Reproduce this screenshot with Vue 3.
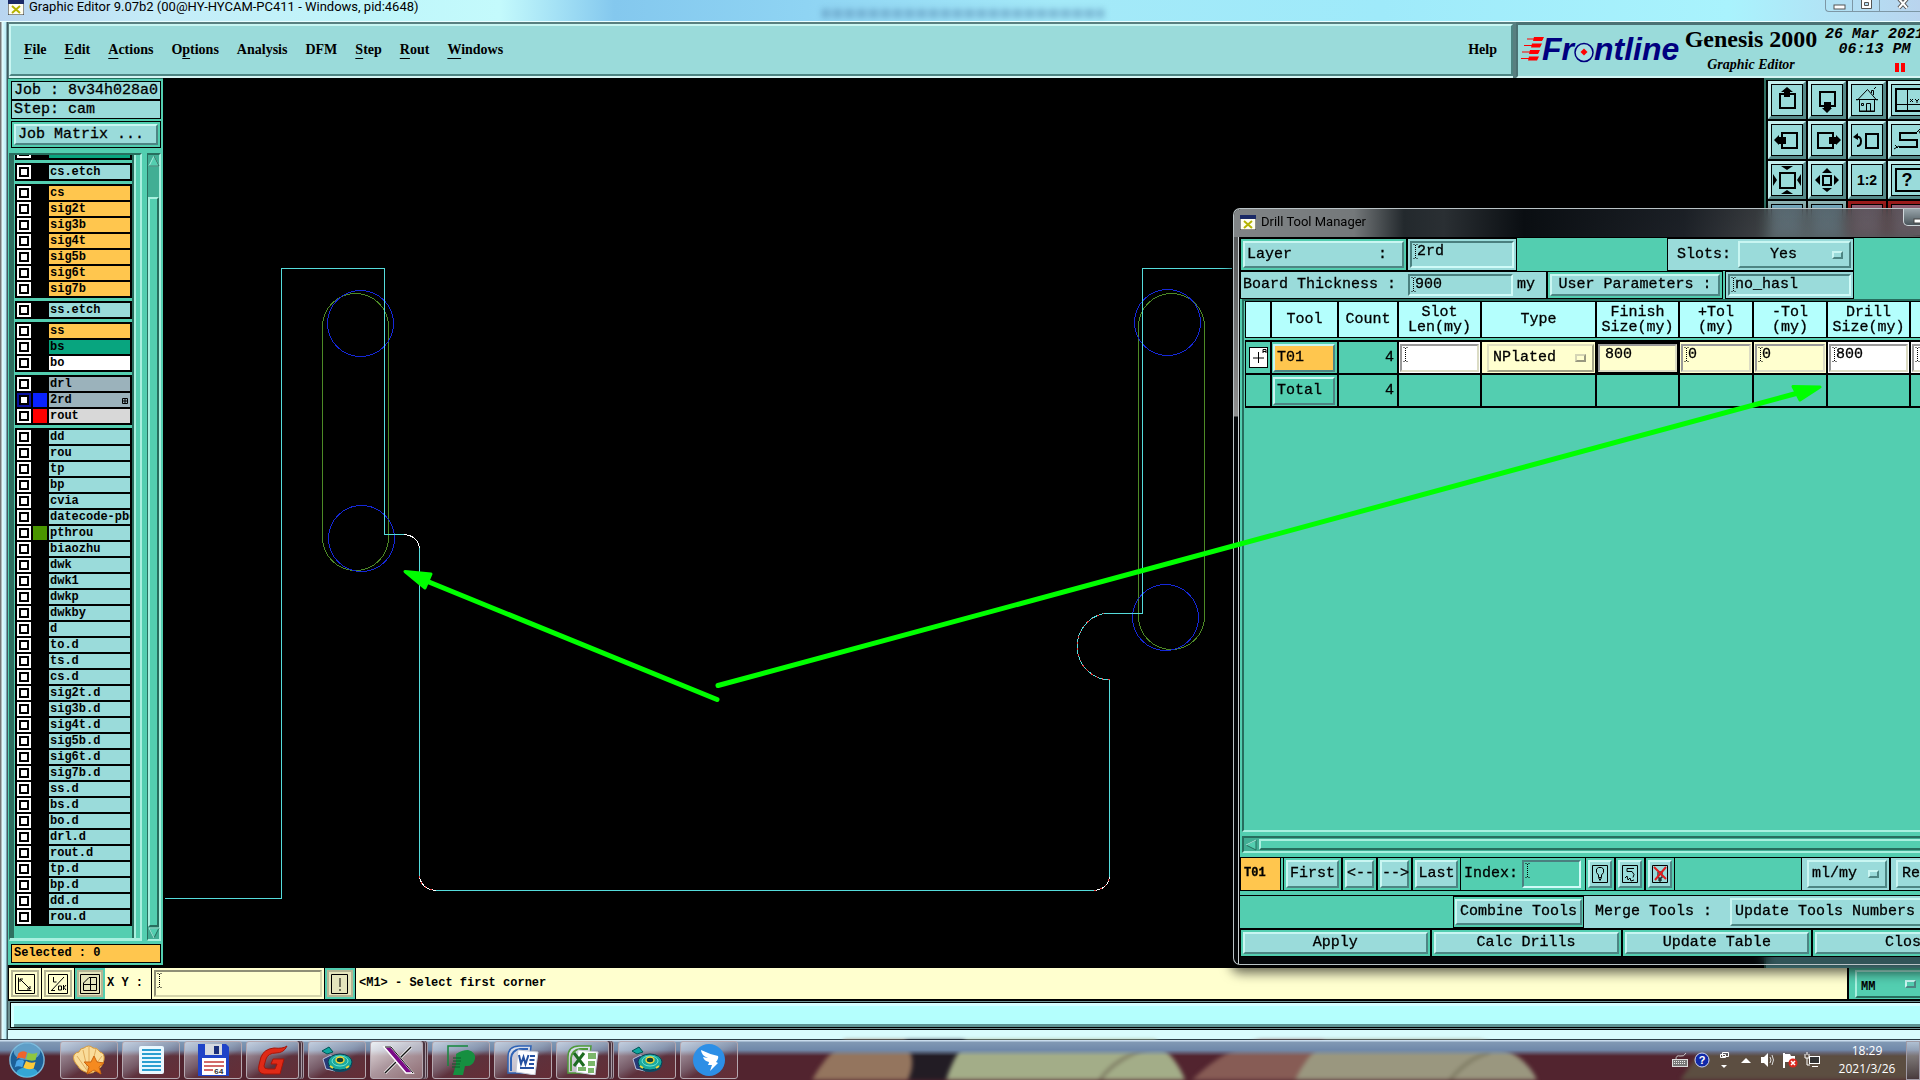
<template>
  <div class="desktop">
    <svg class="defs" aria-hidden="true">
      <symbol id="xwin" viewBox="0 0 16 15">
        <rect x="0" y="0" width="16" height="15" fill="#fffef0" stroke="#222" />
        <rect x="0" y="0" width="16" height="4" fill="#1b2a66" />
        <path d="M4 6 L12 13 M12 6 L4 13" stroke="#b5b300" stroke-width="2" />
      </symbol>
      <symbol id="caret" viewBox="0 0 5 15">
        <path d="M0.5 0.5h1M3.5 0.5h1M0.5 14.5h1M3.5 14.5h1" stroke="#000" />
        <path d="M2.5 1v13" stroke="#000" stroke-dasharray="1 1" />
      </symbol>
      <symbol id="disc" viewBox="0 0 32 28">
        <path d="M1 5 L8 1 L12 6 L6 8Z" fill="#0fa7a0" stroke="#055" />
        <path d="M2 13 L10 9 L14 25 L5 23Z" fill="#283a78" stroke="#b9c4dd" />
        <ellipse cx="19" cy="18" rx="12" ry="8" fill="#0b4e68" />
        <ellipse cx="19" cy="16" rx="12" ry="8" fill="#1aa79c" stroke="#073f55" />
        <ellipse cx="19" cy="15" rx="8" ry="5" fill="none" stroke="#6fe8d7" />
        <ellipse cx="19" cy="14" rx="4" ry="3" fill="#0d3f3c" stroke="#f0d735" stroke-width="1.5" />
        <path d="M9 20l3 2M25 22l3-2" stroke="#f0d735" stroke-width="2" />
      </symbol>
      <symbol id="office" viewBox="0 0 32 30">
        <path d="M1 28 V12 Q1 1 12 1 H24 L21 28Z" fill="#e8eef8" fill-opacity="0.75" stroke="currentColor" stroke-width="1.5" />
        <path d="M4 26 V13 Q5 5 13 4 H21" fill="none" stroke="currentColor" stroke-width="2" />
        <path d="M11 5 L31 7 L28 30 L9 27Z" fill="#fdfdff" stroke="#c5cbd6" />
      </symbol>
    </svg>

    <section class="app-window">
      <header class="titlebar">
        <svg class="xwin"><use href="#xwin" /></svg>
        <span class="window-title">Graphic Editor 9.07b2 (00@HY-HYCAM-PC411 - Windows, pid:4648)</span>
        <span class="ghost-title"></span>
        <div class="caption-buttons">
          <button aria-label="Minimize"><svg viewBox="0 0 14 12"><rect x="1" y="6" width="11" height="4" fill="#fff" stroke="#555" /></svg></button>
          <button aria-label="Maximize"><svg viewBox="0 0 14 12"><path d="M1.500 0.500h10v9h-10zM4.500 3.500h4v3h-4z" fill="#fff" stroke="#555" fill-rule="evenodd" /></svg></button>
          <button class="wide" aria-label="Close"><svg viewBox="0 0 14 12"><path d="M3 0l8 9M11 0l-8 9" stroke="#555" stroke-width="4" /><path d="M3 0l8 9M11 0l-8 9" stroke="#fff" stroke-width="2" /></svg></button>
        </div>
      </header>

      <div class="head-row">
        <nav class="menubar">
          <button v-for="m in menus" :key="m.join('')"><span>{{ m[0] }}</span><u>{{ m[1] }}</u><span>{{ m[2] }}</span></button>
          <button class="help">Help</button>
        </nav>
        <div class="brand">
          <svg class="logo" viewBox="0 0 162 52" role="img" aria-label="Frontline">
            <g fill="#f00" stroke="#f00">
              <path d="M6 14h16M3 20.500h17M1 27h17M0 33.500h16" />
              <path d="M13 12h10l-2 4h-9zM11 18.500h10l-2 4h-9zM9 25h10l-2 4h-9zM8 31.500h10l-2 4h-9z" stroke="none" />
            </g>
            <text x="21" y="35">Fr</text>
            <circle cx="63" cy="27.500" r="9" fill="#a9e0e2" stroke="#00007f" stroke-width="1.500" />
            <path d="M63 23.500l3.500 3.500-3.500 3.500-3.500-3.500z" fill="#f00" />
            <text x="73" y="35">ntline</text>
          </svg>
          <div class="product">
            <strong>Genesis 2000</strong>
            <em>Graphic Editor</em>
          </div>
          <div class="clock">
            <span>26 Mar 2021</span>
            <span>06:13 PM</span>
            <i class="pause"></i>
          </div>
        </div>
      </div>

      <div class="workspace">
        <aside class="sidebar">
          <div class="info">Job : 8v34h028a0</div>
          <div class="info">Step: cam</div>
          <div class="matrix"><button>Job Matrix ...</button></div>
          <div class="layer-area">
            <div class="layer-view">
              <div class="layer-list">
                <div v-for="(group, g) in layerGroups" :key="g" class="layer-group">
                  <label v-for="l in group" :key="l.name" class="layer" :class="[l.tone, { active: l.active }]">
                    <input type="checkbox">
                    <i class="swatch" :class="l.swatch"></i>
                    <span class="layer-name">{{ l.name }}</span>
                    <svg v-if="l.active" class="grid-mark" viewBox="0 0 6 6"><path d="M0.5 0.5h5v5h-5zM3 0v6M0 3h6" fill="none" stroke="#000" /></svg>
                  </label>
                </div>
              </div>
            </div>
            <div class="vscroll">
              <svg viewBox="0 0 12 12"><path d="M6 1 L11 11 H1Z" fill="#53ceb0" stroke="#a8f0df" /><path d="M6 1L11 11H1" fill="none" stroke="#276e5e" /></svg>
              <i class="thumb"></i>
              <svg viewBox="0 0 12 12"><path d="M6 11 L1 1 H11Z" fill="#53ceb0" stroke="#276e5e" /><path d="M11 1H1L6 11" fill="none" stroke="#a8f0df" /></svg>
            </div>
          </div>
          <div class="selected">Selected : 0</div>
        </aside>

        <main class="canvas">
          <!-- board drawing, in screen units of the editor -->
          <svg class="board" shape-rendering="crispEdges">
            <g transform="translate(-163 -78)" fill="none">
              <g stroke="#4d8a26">
                <rect x="322.500" y="293.500" width="66" height="277" rx="33" />
                <rect x="1138.500" y="293.500" width="66" height="356" rx="33" />
              </g>
              <g stroke="#1528d8">
                <circle v-for="h in holes" :key="h.x" :cx="h.x" :cy="h.y" r="33" />
              </g>
              <g stroke="#55dcdc">
                <path d="M165 898.500H281.500V268.500H384.500V534.500H404" />
                <path d="M419.500 548V876M436 890.500H1094M1109.500 877V680M1104 613.500H1142.500V268.500H1232" />
                <path d="M1109.500 680A33.600 33.600 0 0 1 1104 613.500" />
              </g>
              <g stroke="#fff">
                <path d="M404 534.500Q418 536 419.500 548M419.500 876Q421 889 436 890.500M1094 890.500Q1108 889 1109.500 877" />
              </g>
              <g stroke="#e44" stroke-dasharray="2 4">
                <path d="M419.500 876Q421 889 436 890.500M1094 890.500Q1108 889 1109.500 877M1109.500 680A33.600 33.600 0 0 1 1104 613.500" />
              </g>
            </g>
          </svg>
        </main>

        <aside class="toolbox">
          <div class="tool-grid">
            <button v-for="(t, i) in tools" :key="i" :class="t.tone" :aria-label="t.label">
              <svg viewBox="0 0 30 30">
                <path v-for="(d, k) in t.lines" :key="'l' + k" :d="d" fill="none" stroke="#000" :stroke-width="t.thin ? 1 : 2" />
                <path v-if="t.solid" :d="t.solid" fill="#000" />
                <path v-if="t.fine" :d="t.fine" fill="none" stroke="#000" />
                <text v-if="t.text" x="15" :y="t.y" :font-size="t.size" text-anchor="middle">{{ t.text }}</text>
              </svg>
            </button>
          </div>
        </aside>
      </div>

      <div class="status-row">
        <button class="mode" aria-label="Diagonal"><svg viewBox="0 0 20 20"><path d="M0.500 0.500h19v19h-19zM3.500 3.500v13h13M5 5L15 15M5 8V5H8M15 12V15H12" /></svg></button>
        <button class="mode" aria-label="Line ok"><svg viewBox="0 0 20 20"><path d="M0.500 0.500h19v19h-19zM3 17L16 3M3 16.500h4M5.500 3v5h3M10.500 12h3v4h-3zM15.500 11v5M18 11l-2 2.500 2 2.500" /></svg></button>
        <button class="mode on" aria-label="Grid"><svg viewBox="0 0 20 20"><path d="M0.500 0.500h19v19h-19zM3.500 16.500V9L9 3.500H16.500V16.500ZM10.500 3v14M3 10.500h14" /></svg></button>
        <label class="xy-label" for="xy">X Y :</label>
        <div class="xy-box"><div class="field"><input id="xy" type="text"><svg class="caret"><use href="#caret" /></svg></div></div>
        <button class="mode on" aria-label="Message"><svg viewBox="0 0 20 20"><path d="M1.500 0.500h16v19h-16z" /><path d="M10 4v9M10 15v2" stroke-width="2" /></svg></button>
        <div class="message">&lt;M1&gt; - Select first corner</div>
        <label class="unit-box"><select aria-label="Units"><option>MM</option></select><i class="knob"></i></label>
      </div>
      <div class="prompt"><div></div></div>
    </section>

    <section class="dialog">
      <header class="dialog-title">
        <svg class="xwin"><use href="#xwin" /></svg>
        <span>Drill Tool Manager</span>
        <button aria-label="Minimize"><svg viewBox="0 0 14 6"><rect x="1" y="1" width="11" height="4" fill="#fff" stroke="#444" /></svg></button>
      </header>
      <div class="dialog-body">
        <div class="form-row">
          <div class="frame layer-frame"><button class="btn spread"><span>Layer</span><span>:</span></button></div>
          <div class="frame pale layer-field"><div class="field"><input type="text" value="2rd" aria-label="Layer"><svg class="caret"><use href="#caret" /></svg></div></div>
          <div class="slots">
            <label for="slots">Slots:</label>
            <div class="option"><select id="slots"><option>Yes</option></select><i class="knob"></i></div>
          </div>
        </div>
        <div class="form-row second">
          <div class="frame pale thickness">
            <label for="thick">Board Thickness :</label>
            <div class="field"><input id="thick" type="text" value="900"><svg class="caret"><use href="#caret" /></svg></div>
            <span>my</span>
          </div>
          <div class="frame params"><button class="btn">User Parameters :</button></div>
          <div class="frame pale param-field"><div class="field"><input type="text" value="no_hasl" aria-label="User parameters"><svg class="caret"><use href="#caret" /></svg></div></div>
        </div>

        <div class="table-view">
          <table>
            <colgroup><col v-for="(w, i) in columns" :key="i" :class="w"></colgroup>
            <thead>
              <tr>
                <th></th><th>Tool</th><th>Count</th><th>Slot<br>Len(my)</th><th>Type</th><th>Finish<br>Size(my)</th>
                <th>+Tol<br>(my)</th><th>-Tol<br>(my)</th><th>Drill<br>Size(my)</th><th></th>
              </tr>
            </thead>
            <tbody>
              <tr>
                <td><svg class="expand" viewBox="0 0 19 21"><rect x="0.500" y="0.500" width="18" height="20" fill="#fff" stroke="#000" /><path d="M4 11h11M9.500 5v11M14 6V2.500h3V6M14 4.500h3" fill="none" stroke="#000" /></svg></td>
                <td><button class="btn orange">T01</button></td>
                <td class="num">4</td>
                <td class="white"><div class="field"><input type="text" aria-label="Slot length"><svg class="caret"><use href="#caret" /></svg></div></td>
                <td class="cream"><div class="option"><select aria-label="Type"><option>NPlated</option></select><i class="knob"></i></div></td>
                <td class="cream focus"><div class="field"><input type="text" value="800" aria-label="Finish size"></div></td>
                <td class="cream"><div class="field"><input type="text" value="0" aria-label="Plus tolerance"><svg class="caret"><use href="#caret" /></svg></div></td>
                <td class="cream"><div class="field"><input type="text" value="0" aria-label="Minus tolerance"><svg class="caret"><use href="#caret" /></svg></div></td>
                <td class="white"><div class="field"><input type="text" value="800" aria-label="Drill size"><svg class="caret"><use href="#caret" /></svg></div></td>
                <td class="white"><div class="field"><input type="text" aria-label="Drill"><svg class="caret"><use href="#caret" /></svg></div></td>
              </tr>
              <tr>
                <td></td><td><button class="btn green">Total</button></td><td class="num">4</td>
                <td v-for="n in 7" :key="n"></td>
              </tr>
            </tbody>
          </table>
        </div>
        <div class="hscroll">
          <svg viewBox="0 0 12 12"><path d="M1 6L11 1V11Z" fill="#53ceb0" stroke="#276e5e" /><path d="M11 1L1 6" stroke="#a8f0df" /></svg>
          <i></i>
        </div>

        <div class="nav-row">
          <div class="current">T01</div>
          <div class="frame w-first"><button class="btn">First</button></div>
          <div class="frame w-arrow"><button class="btn">&lt;--</button></div>
          <div class="frame w-arrow"><button class="btn">--&gt;</button></div>
          <div class="frame w-last"><button class="btn">Last</button></div>
          <label class="index-label" for="index">Index:</label>
          <div class="field index"><input id="index" type="text"><svg class="caret"><use href="#caret" /></svg></div>
          <div class="frame w-icon"><button class="btn" aria-label="Light"><svg viewBox="0 0 16 18"><path d="M0.500 0.500h15v17h-15zM6.500 12V10L4.500 7.500V4L6.500 2.500h3L11.500 4v3.500L9.500 10v2M6.500 12.500h3l-1.500 3z" /></svg></button></div>
          <div class="frame w-icon"><button class="btn" aria-label="Snap"><svg viewBox="0 0 16 18"><path d="M0.500 0.500h15v17h-15zM12 3.500H5v3h5l2 3-1 3M3 13l2-2 1 4 2-2 1 3 3-1" /></svg></button></div>
          <div class="frame w-icon"><button class="btn" aria-label="Light off"><svg viewBox="0 0 16 18"><path d="M0.500 0.500h15v17h-15zM6 13V7h4v6zM7 14h2v2h-2z" /><path class="cross" d="M2 2L14 14M14 2L3 15" /></svg></button></div>
          <div class="units"><div class="option"><select aria-label="Size units"><option>ml/my</option></select><i class="knob"></i></div></div>
          <div class="units rest"><button class="btn">Reset</button></div>
        </div>
        <div class="tools-row">
          <div class="frame combine"><button class="btn">Combine Tools</button></div>
          <div class="merge">
            <label for="merge">Merge Tools :</label>
            <div class="option"><select id="merge"><option>Update Tools Numbers</option></select></div>
          </div>
        </div>
        <div class="action-row">
          <div v-for="a in ['Apply', 'Calc Drills', 'Update Table', 'Close']" :key="a" class="frame"><button class="btn">{{ a }}</button></div>
        </div>
      </div>
    </section>

    <svg class="notes" aria-hidden="true">
      <g fill="#00ff00" stroke="#00ff00" stroke-linecap="round" stroke-linejoin="round">
        <path d="M717 699.500L424 580" stroke-width="5" fill="none" />
        <path d="M405 571.500L431 574L425 588Z" stroke-width="3" />
        <path d="M718 685.500L1798 393" stroke-width="5" fill="none" />
        <path d="M1820 387L1793 386.500L1800 400Z" stroke-width="3" />
      </g>
    </svg>

    <footer class="taskbar">
      <svg class="wallpaper" viewBox="0 0 1920 40" preserveAspectRatio="none">
        <path d="M812 40Q825 16 845 0H905Q918 20 908 40Z" fill="#94755e" />
        <path d="M905 0H965L948 40H908Q918 20 905 0Z" fill="#221c24" />
        <path d="M946 40Q952 20 966 0H1155Q1178 20 1185 40Z" fill="#a3ad88" />
        <path d="M1192 40Q1225 8 1260 0H1325L1295 40Z" fill="#875c55" />
        <path d="M1295 40Q1305 18 1325 0H1480Q1525 12 1537 40Z" fill="#9a977f" />
        <path d="M1100 40Q1115 18 1152 6M1450 40Q1468 18 1490 12" stroke="#7b7860" stroke-width="3" fill="none" />
        <path d="M1680 40L1700 12H1920V40Z" fill="#5c4e41" />
      </svg>
      <button class="start" aria-label="Start">
        <svg viewBox="0 0 40 40">
          <circle cx="20" cy="20" r="18" fill="#1c5f97" stroke="#78b7d9" stroke-width="1.500" />
          <ellipse cx="20" cy="11" rx="14" ry="9" fill="#8cc8e8" fill-opacity="0.6" />
          <ellipse cx="20" cy="33" rx="11" ry="5" fill="#3fc3f0" fill-opacity="0.7" />
          <path d="M11 13Q15 9 20 12L18 19Q13 16 9 19Z" fill="#f0642c" />
          <path d="M21 12Q26 15 31 12L29 20Q24 22 19 19Z" fill="#8fc641" />
          <path d="M9 21Q13 18 17 21L15 28Q11 25 7 28Z" fill="#4aa6e8" />
          <path d="M19 21Q24 24 29 22L27 29Q21 31 16 28Z" fill="#fcc93a" />
        </svg>
      </button>
      <button v-for="(t, i) in tasks" :key="i" class="task" :class="{ stacked: t.stack, current: t.current }" :aria-label="t.label">
        <svg v-if="t.icon === 'shell'" viewBox="0 0 34 32">
          <path d="M17 29Q8 27 6 22Q0 16 2 11Q4 8 7 8Q8 4 12 4Q17 0 21 4Q25 3 28 8Q33 9 32 16Q30 24 25 26Q20 30 17 29Z" fill="#f9dc9a" stroke="#d79a3b" />
          <path d="M16 28L5 12M16 28L11 6M17 28L17 3M18 28L24 5M18 28L30 12" stroke="#e0ac5c" fill="none" />
          <path d="M22 12L25 18L32 19L27 23L29 30L22 26L15 30L17 23L12 18L19 18Z" fill="#f58a1f" stroke="#c96510" />
        </svg>
        <svg v-else-if="t.icon === 'note'" viewBox="0 0 34 32">
          <rect x="5" y="2" width="25" height="28" rx="2" fill="#e9f8ff" />
          <path d="M8 6h19M8 10h19M8 14h19M8 18h19M8 22h19M8 26h19" stroke="#2b9fd0" stroke-width="2" />
        </svg>
        <svg v-else-if="t.icon === 'disk'" viewBox="0 0 34 32">
          <path d="M2 0H30L33 3V32H2Z" fill="#1f43c8" />
          <rect x="9" y="0" width="17" height="11" fill="#d5d9e0" /><rect x="18" y="2" width="5" height="8" fill="#1b2f7c" />
          <rect x="6" y="14" width="24" height="17" fill="#fff" />
          <path d="M8 18h20M8 22h20M8 26h9" stroke="#c33a3a" stroke-width="1.500" />
          <text x="18" y="30" font-size="8" font-weight="bold" fill="#333">64</text>
        </svg>
        <svg v-else-if="t.icon === 'g'" viewBox="0 0 34 32">
          <path d="M31 2Q28 9 20 9Q12 9 10 15L8 22Q8 25 12 25H19L21 20H15L17 15H28L24 30H8Q1 29 3 21L5 13Q8 5 18 4Q27 5 31 2Z" fill="#e02a17" stroke="#a81408" />
        </svg>
        <svg v-else-if="t.icon === 'disc'" viewBox="0 0 34 32"><use href="#disc" x="1" y="2" width="32" height="28" /></svg>
        <svg v-else-if="t.icon === 'x'" viewBox="0 0 34 32">
          <path d="M30 3L4 29" stroke="#fff" stroke-width="3" /><path d="M30 3L4 29" stroke="#111" stroke-width="1.500" />
          <path d="M3 3H10L32 29H25Z" fill="#7a0a86" stroke="#fff" stroke-width="1.500" /><path d="M4 3H10L32 29" stroke="#111" fill="none" />
        </svg>
        <svg v-else-if="t.icon === 'p'" viewBox="0 0 34 32">
          <path d="M4 22V2H24" fill="none" stroke="#15883c" stroke-width="1.500" />
          <path d="M12 10Q18 6 24 6Q32 8 31 15Q29 23 21 22L19 31H9L12 20Z" fill="#168f40" />
          <path d="M9 14h8M9 17h8M8 20h8M8 23h8" stroke="#0b5d28" />
        </svg>
        <svg v-else-if="t.icon === 'word'" viewBox="0 0 34 32" color="#2f63b5">
          <use href="#office" x="1" y="1" width="32" height="30" />
          <path d="M13 11l2 9 2.500-7 2 7 3-9M24 12h5M23.500 16h5M23 20h5M14 24h14" fill="none" stroke="#2450a0" stroke-width="2" />
        </svg>
        <svg v-else-if="t.icon === 'excel'" viewBox="0 0 34 32" color="#4f9a3a">
          <use href="#office" x="1" y="1" width="32" height="30" />
          <path d="M22 9h8v6h-8zM22 17h7v5h-7zM22 24h6v5h-6zM12 23h8v4h-8z" fill="#7bb66a" />
          <path d="M8 9L18 22M18 9L8 22" stroke="#1d6b22" stroke-width="3" />
        </svg>
        <svg v-else viewBox="0 0 34 32">
          <circle cx="17" cy="16" r="16" fill="#2d8fe6" />
          <path d="M9 6Q17 10 26 12Q27 14 24 18L26 19L18 27L20 21H16Q17 19 17 18Q12 17 11 13Q15 14 16 14Q9 11 9 6Z" fill="#fff" />
        </svg>
      </button>
      <div class="tray">
        <svg viewBox="0 0 16 16"><rect x="0.500" y="7.500" width="15" height="7" fill="#777" stroke="#ddd" /><path d="M2 9.500h12M2 11.500h12" stroke="#eee" stroke-dasharray="1 1" /><path d="M4 7Q4 3 8 4T14 1" fill="none" stroke="#ccc" /></svg>
        <svg viewBox="0 0 16 16"><circle cx="8" cy="8" r="7" fill="#1029a8" stroke="#cfd6f2" /><text x="8" y="12" font-size="11" font-weight="bold" fill="#fff" text-anchor="middle">?</text></svg>
        <svg viewBox="0 0 16 16"><path d="M6.500 0.500h6v4h-6zM4.500 2.500h5v3h-5z" fill="none" stroke="#fff" /><path d="M5 13h6l-3 3z" fill="#fff" /></svg>
        <svg viewBox="0 0 16 16"><path d="M3 11h10L8 6z" fill="#fff" /></svg>
        <svg viewBox="0 0 16 16"><path d="M1 5h3l4-4v14l-4-4H1z" fill="#fff" /><path d="M10 5q2 3 0 6M12 3q3 5 0 10" fill="none" stroke="#ddd" /></svg>
        <svg viewBox="0 0 16 16"><path d="M2 1v15" stroke="#fff" stroke-width="2" /><path d="M3 2h5l1 2h4v6H3z" fill="#fff" /><circle cx="11" cy="11" r="4.500" fill="#d9271e" /><path d="M9 9l4 4M13 9l-4 4" stroke="#fff" stroke-width="1.500" /></svg>
        <svg viewBox="0 0 16 16"><rect x="5.500" y="4.500" width="10" height="7" fill="#333" stroke="#fff" /><path d="M8 14.500h6M1 2v4h4V2M3 0v3M3 6v7h3" fill="none" stroke="#fff" /></svg>
      </div>
      <div class="time"><span>18:29</span><span>2021/3/26</span></div>
      <button class="show-desktop" aria-label="Show desktop"></button>
    </footer>
  </div>
</template>

<script setup>
// [before, underlined, after]
const menus = [
  ['', 'F', 'ile'],
  ['', 'E', 'dit'],
  ['', 'A', 'ctions'],
  ['O', 'p', 'tions'],
  ['Analysis', '', ''],
  ['DFM', '', ''],
  ['', 'S', 'tep'],
  ['', 'R', 'out'],
  ['', 'W', 'indows'],
]

const rows = (names, tone = '') => names.split(' ').map((name) => ({ name, tone }))

const layerGroups = [
  rows('bs', 'sea'),
  rows('cs.etch'),
  rows('cs sig2t sig3b sig4t sig5b sig6t sig7b', 'orange'),
  rows('ss.etch'),
  [...rows('ss', 'orange'), ...rows('bs', 'sea'), ...rows('bo', 'white')],
  [
    { name: 'drl', tone: 'slate' },
    { name: '2rd', tone: 'slate', swatch: 'blue', active: true },
    { name: 'rout', tone: 'grey', swatch: 'red' },
  ],
  [
    ...rows('dd rou tp bp cvia datecode-pbd'),
    { name: 'pthrou', tone: '', swatch: 'olive' },
    ...rows('biaozhu dwk dwk1 dwkp dwkby d to.d ts.d cs.d sig2t.d sig3b.d sig4t.d sig5b.d sig6t.d sig7b.d'),
    ...rows('ss.d bs.d bo.d drl.d rout.d tp.d bp.d dd.d rou.d'),
  ],
]

const columns = ['c-ico', 'c-tool', 'c-cnt', 'c-mid', 'c-type', 'c-mid', 'c-tol', 'c-tol', 'c-mid', 'c-rest']

const holes = [
  { x: 360.5, y: 323.5 },
  { x: 361.5, y: 538.5 },
  { x: 1167.5, y: 322.5 },
  { x: 1165.5, y: 617.5 },
]

const tools = [
  { label: 'Pan up', lines: ['M8 9h15v14h-15z'], solid: 'M15 2L21 7H18V12H12V7H9Z' },
  { label: 'Pan down', lines: ['M8 7h15v14h-15z'], solid: 'M15 28L20 23H19V17H12V23H10Z' },
  { label: 'Home', thin: true, lines: ['M5 15.5L15.500 4.500L25 15.500M4 14.500h22M7.500 15v11.500h15V15M14.500 26V18.500h4V26M9.500 18.500h2v2h-2zM19.500 8V5.500h2V10M22 4l2-2'], fine: 'M7 26h16' },
  { label: 'Position', lines: ['M4 4h25v22h-25z'], fine: 'M15.500 4v22M4 19.500h25M18 14l3 3M21 14l-3 3M23 14l2 2 2-2M25 16v2' },
  { label: 'Pan left', lines: ['M10 8h15v15h-15z'], solid: 'M2 15L7 10V12H14V19H7V20Z' },
  { label: 'Pan right', lines: ['M6 8h15v15h-15z'], solid: 'M29 15L24 20V19H17V12H24V10Z' },
  { label: 'Previous view', lines: ['M14 9h12v14h-12z', 'M4 12q5-1 5 4t-4 5'], solid: 'M1 12L6 8V15Z' },
  { label: 'Snake', lines: ['M25 8H8V15H25V22H7'], fine: 'M24 8l4-4M27 6l2 4M2 24l5-3M3 20l3 3' },
  { label: 'Zoom out', lines: ['M8 8h15v15h-15z'], solid: 'M9 1H21L15 5ZM9 29H21L15 25ZM1 9V21L5 15ZM29 9V21L25 15Z' },
  { label: 'Zoom in', lines: ['M11 11h8v9h-8z'], solid: 'M15 3L20 8H10ZM15 27L20 23H10ZM3 15L8 10V20ZM27 15L22 10V20Z' },
  { label: 'Scale', lines: [], text: '1:2', size: 14, y: 20 },
  { label: 'Query', lines: ['M4 4h25v22h-25z'], text: '?', size: 18, y: 21 },
  { label: 'Tool', lines: [], tone: 'dim' },
  { label: 'Tool', lines: [], tone: 'dim' },
  { label: 'Tool', lines: [], tone: 'red' },
  { label: 'Tool', lines: [], tone: 'red' },
]

const tasks = [
  { icon: 'shell', label: 'Shell' },
  { icon: 'note', label: 'Notes' },
  { icon: 'disk', label: 'Total Commander' },
  { icon: 'g', label: 'Genesis', stack: true },
  { icon: 'disc', label: 'Toolkit' },
  { icon: 'x', label: 'X server', stack: true, current: true },
  { icon: 'p', label: 'Print' },
  { icon: 'word', label: 'Word' },
  { icon: 'excel', label: 'Excel', stack: true },
  { icon: 'disc', label: 'Toolkit' },
  { icon: 'ding', label: 'DingTalk' },
]
</script>

<style>
body {
  margin: 0;
  overflow: hidden;
}
</style>

<style scoped>
.desktop {
  --teal: #9adbda;
  --green: #53ceb0;
  --light: #c9f6f2;
  --shade: #4d8583;
  position: relative;
  display: flex;
  flex-direction: column;
  height: 100vh;
  overflow: hidden;
  background: #d9fcfd;
  color: #000;
  font-family: "Liberation Mono", monospace;
}
.desktop *,
.desktop *::before {
  box-sizing: border-box;
}
.defs {
  position: absolute;
  width: 0;
  height: 0;
}
button,
input,
select {
  margin: 0;
  padding: 0;
  border: 0;
  border-radius: 0;
  background: none;
  color: inherit;
  font: inherit;
  appearance: none;
}
svg {
  display: block;
  flex: none;
}

/* main window */
.app-window {
  flex: 1;
  min-height: 0;
  display: flex;
  flex-direction: column;
  padding: 0 0 9px 8px;
  background: linear-gradient(90deg, #777 1px, #e5fdff 2px, #b8ecf6 6px, #3f5a60 7px, #3f5a60 8px, transparent 8px), linear-gradient(#d9fcfd, #d9fcfd);
}
.titlebar {
  position: relative;
  flex: none;
  display: flex;
  height: 22px;
  margin-left: -8px;
  padding-left: 8px;
  overflow: hidden;
  background: linear-gradient(90deg, #b9d5f0, #c5ecf8 8%, #bff6fa 20%, #c4fafc 26%, #84c8ee 32%, #8fd4f3 42%, #a4e9f8 55%, #9feafa 72%, #a9f3fd 90%, #b9d4ee);
  border-bottom: 1px solid #eaffff;
}
.xwin {
  width: 16px;
  height: 15px;
}
.window-title {
  margin-left: 5px;
  font: 13px/14px Roboto, "Open Sans", sans-serif;
}
.ghost-title {
  position: absolute;
  left: 822px;
  top: 9px;
  width: 282px;
  height: 9px;
  background: repeating-linear-gradient(90deg, #4b7fa8 0 7px, #7fb8da 7px 12px);
  opacity: 0.5;
  filter: blur(3px);
}
.caption-buttons {
  display: flex;
  margin-left: auto;
  height: 12px;
  border: 1px solid #7d97a5;
  border-top: 0;
  border-right: 0;
  border-radius: 0 0 0 4px;
}
.caption-buttons button {
  width: 27px;
  padding: 0 7px;
  border-right: 1px solid #7d97a5;
}
.caption-buttons .wide {
  width: 40px;
  padding: 0 13px 0 16px;
  border-right: 0;
}
.caption-buttons svg {
  width: 14px;
  height: 12px;
  margin-top: -2px;
}
.head-row {
  flex: none;
  display: flex;
  height: 56px;
  background: #587f80;
}
.menubar {
  flex: 1;
  display: flex;
  align-items: center;
  gap: 18px;
  margin: 2px 3px 2px 1px;
  padding: 0 14px 0 13px;
  background: var(--teal);
  border: 2px solid;
  border-color: var(--light) var(--shade) var(--shade) var(--light);
  box-shadow: 0 2px #d5f6f4;
  font: bold 14px/18px "Liberation Serif", serif;
}
.menubar u {
  text-underline-offset: 4px;
}
.menubar .help {
  margin-left: auto;
}
.brand {
  flex: 0 0 404px;
  display: flex;
  overflow: hidden;
  background: var(--teal);
  border: 2px solid;
  border-color: #4b7274 #4b7274 #d5f6f4;
  border-right: 0;
  border-top-width: 3px;
}
.logo {
  width: 162px;
  height: 52px;
  margin-left: 3px;
}
.logo text {
  font: italic bold 32px "Liberation Sans", sans-serif;
  fill: #00007f;
}
.product {
  width: 136px;
  flex: none;
  text-align: center;
  white-space: nowrap;
  font-family: "Liberation Serif", serif;
}
.product strong {
  display: block;
  font-size: 24px;
  line-height: 28px;
}
.product em {
  display: block;
  margin-top: 2px;
  font-size: 14px;
  font-weight: bold;
  line-height: 20px;
}
.clock {
  flex: none;
  display: flex;
  flex-direction: column;
  align-items: center;
  margin-left: 6px;
  padding-top: 2px;
  font: italic bold 15px/15px "Liberation Mono", monospace;
  white-space: nowrap;
}
.pause {
  width: 10px;
  height: 9px;
  margin: 6px 0 0 50px;
  border: solid #f00;
  border-width: 0 4px;
}

/* workspace */
.workspace {
  flex: 1;
  min-height: 0;
  display: flex;
  background: #000;
}
.sidebar {
  flex: 0 0 155px;
  display: flex;
  flex-direction: column;
  margin-bottom: 3px;
  padding: 2px 2px 2px 3px;
  background: var(--green);
  border-top: 1px solid #276e5e;
}
.info {
  height: 19px;
  padding-left: 2px;
  border: 1px solid #000;
  background: var(--teal);
  font-size: 15px;
  line-height: 18px;
  white-space: nowrap;
}
.info,
.matrix {
  -webkit-text-stroke: 0.3px #000;
}
.matrix {
  height: 27px;
  margin-top: 2px;
  padding: 2px;
  border: 1px solid #000;
}
.matrix button {
  width: 100%;
  height: 21px;
  padding-left: 2px;
  background: var(--teal);
  border: 2px solid;
  border-color: var(--light) var(--shade) var(--shade) var(--light);
  text-align: left;
  font-size: 15px;
  line-height: 16px;
}
.layer-area {
  flex: 1;
  min-height: 0;
  display: flex;
  gap: 5px;
  margin: 5px -1px 3px -2px;
}
.layer-view {
  width: 133px;
  overflow: hidden;
  padding: 0 7px 3px 5px;
  border: solid;
  border-width: 2px 2px 3px 1px;
  border-color: #276e5e #a8f0df #a8f0df #276e5e;
  background: linear-gradient(90deg, #2f6f60 4px, var(--green) 4px 122px, #276e5e 122px 124px, #a8f0df 124px 126px, var(--green) 126px);
}
.layer-list {
  margin-top: -13px;
}
.layer-group {
  width: 117px;
  margin-bottom: 3px;
  padding: 2px 2px 0;
  background: #000;
}
.layer {
  display: flex;
  height: 16px;
  gap: 2px;
}
.layer input {
  width: 14px;
  height: 14px;
  border: 2px solid #fff;
  background: #fff;
  box-shadow: inset 0 0 0 2px #000;
}
.layer.active input {
  border-color: #0a12a0;
}
.swatch {
  width: 14px;
  height: 14px;
}
.swatch.blue {
  background: #0a22ff;
}
.swatch.red {
  background: #f00;
}
.swatch.olive {
  background: #4a9600;
}
.layer-name {
  flex: 1;
  height: 14px;
  padding-left: 1px;
  overflow: hidden;
  background: var(--teal);
  font-size: 12px;
  font-weight: bold;
  line-height: 14px;
  white-space: nowrap;
}
.orange .layer-name {
  background: #ffc64e;
}
.sea .layer-name {
  background: #08a57f;
}
.white .layer-name {
  background: #fff;
}
.slate .layer-name {
  background: #9bb2bb;
}
.grey .layer-name {
  background: #d8d8d8;
}
.grid-mark {
  width: 6px;
  height: 6px;
  margin: 5px 2px 0 -10px;
}
.vscroll {
  width: 14px;
  display: flex;
  flex-direction: column;
  border: 1px solid;
  border-width: 2px 2px 2px 1px;
  border-color: #276e5e #a8f0df #a8f0df #276e5e;
  background: #41ae94;
}
.vscroll svg,
.hscroll svg {
  width: 12px;
  height: 12px;
}
.vscroll .thumb {
  flex: 1;
  margin-top: 30px;
  border: 2px solid;
  border-color: #a8f0df #276e5e #276e5e #a8f0df;
  background: var(--green);
}
.selected {
  height: 19px;
  padding-left: 2px;
  border: 1px solid #000;
  background: #ffc64e;
  font-size: 12px;
  font-weight: bold;
  line-height: 17px;
}
.canvas {
  flex: 1;
  overflow: hidden;
}
.board {
  width: 100%;
  height: 100%;
}
.toolbox {
  flex: 0 0 156px;
  overflow: hidden;
  padding: 1px 0 0 2px;
  border-left: 2px solid #2f6f62;
  background: #6fc0c4;
  border-top: 2px solid #2f6f62;
}
.tool-grid {
  display: grid;
  grid-template-columns: repeat(4, 38px);
  gap: 2px;
  width: 160px;
  margin: -1px 0 0 -2px;
  padding: 1px 0 2px 2px;
  background: #000;
}
.tool-grid button {
  width: 38px;
  height: 38px;
  border: 3px solid;
  border-color: #c4efee #558a8a #558a8a #c4efee;
  padding: 1px;
  background: var(--teal);
}
.tool-grid svg {
  width: 30px;
  height: 30px;
  outline: 1px solid #000;
}
.tool-grid text {
  font-family: "Liberation Sans", sans-serif;
  font-weight: bold;
}
.tool-grid .dim {
  background: #7fb6cc;
  border-color: #8fb5b5;
}
.tool-grid .red {
  background: #a06a80;
  border-color: #a01c1c;
}

/* status */
.status-row {
  flex: none;
  display: flex;
  height: 33px;
  padding-left: 1px;
  border-bottom: 2px solid #000;
  background: #000;
  font-size: 12px;
  font-weight: bold;
  line-height: 31px;
}
.mode {
  flex: none;
  width: 32px;
  margin-right: 1px;
  padding: 4px;
  border: 2px solid #ffffcf;
  outline: 2px solid #b5b594;
  outline-offset: -4px;
  background: #ffffcf;
}
.mode svg {
  width: 20px;
  height: 20px;
}
.mode path {
  fill: none;
  stroke: #000;
  stroke-width: 1;
}
.mode.on {
  width: 30px;
  padding: 4px 3px;
  margin: 0;
  border-color: var(--green);
  background: #e6e6bd;
}
.xy-label {
  width: 46px;
  padding-left: 2px;
  background: #ffffcf;
  white-space: nowrap;
}
.xy-box {
  width: 172px;
  margin: 0 1px;
  padding: 2px;
  background: #ffffcf;
}
.xy-box .field {
  height: 27px;
  border-color: #8f8f76 #d5d5ab #d5d5ab #8f8f76;
}
.message {
  flex: 1;
  margin-left: 1px;
  padding-left: 3px;
  background: #ffffcf;
  white-space: pre;
}
.unit-box {
  position: relative;
  flex: 0 0 71px;
  min-width: 0;
  margin-left: 2px;
  padding: 2px 0 1px 6px;
  overflow: hidden;
  background: var(--green);
}
.unit-box select {
  width: 90px;
  height: 28px;
  padding-left: 4px;
  border: 2px solid;
  border-color: #a8f0df #276e5e #276e5e #a8f0df;
}
.unit-box .knob {
  right: 4px;
}
.prompt {
  flex: none;
  height: 29px;
  padding: 1px 0 1px 2px;
  border-bottom: 1px solid #000;
  background: #6c9090;
}
.prompt div {
  height: 100%;
  background: #b4fffd;
  border: 1px solid #000;
  border-right: 0;
  box-shadow: inset 3px 3px #d5ffff, inset 0 -3px #5d9392;
}

/* shared motif parts */
.field {
  position: relative;
  height: 28px;
  border: 2px solid;
  border-color: #4a807f #d0fbf8 #d0fbf8 #4a807f;
}
.field input {
  display: block;
  width: 100%;
  height: 18px;
  padding-left: 5px;
}
.caret {
  position: absolute;
  left: 1px;
  top: 1px;
  width: 5px;
  height: 15px;
}
.option {
  position: relative;
  height: 28px;
  border: 2px solid;
  border-color: var(--light) var(--shade) var(--shade) var(--light);
}
.option select {
  width: 100%;
  height: 100%;
}
.knob {
  position: absolute;
  right: 6px;
  top: 50%;
  width: 11px;
  height: 8px;
  margin-top: -4px;
  border: 2px solid;
  border-color: var(--light) var(--shade) var(--shade) var(--light);
}
.frame {
  flex: none;
  border: 1px solid #000;
  padding: 2px;
  background: var(--green);
}
.frame.pale {
  background: var(--teal);
}
.btn {
  display: block;
  width: 100%;
  height: 100%;
  border: 2px solid;
  border-color: var(--light) var(--shade) var(--shade) var(--light);
  background: var(--teal);
  text-align: center;
  white-space: nowrap;
}

/* drill tool manager */
.dialog {
  position: absolute;
  left: 1233px;
  top: 208px;
  width: 778px;
  padding: 0 8px 7px 6px;
  border: 1px solid #b9c3c6;
  border-right: 0;
  border-radius: 7px 0 0 7px;
  background: linear-gradient(90deg, transparent 4px, #c9d0d2 4px 5px, #000 5px 6px, transparent 6px), linear-gradient(rgba(110, 114, 116, 0.7), rgba(190, 190, 190, 0.75) 207px, rgba(8, 12, 16, 0.6) 208px);
  backdrop-filter: blur(6px);
  box-shadow: 0 6px 12px 2px rgba(0, 0, 0, 0.6);
}
.dialog-title {
  display: flex;
  align-items: center;
  height: 28px;
  margin: 0 -8px 0 -6px;
  padding: 0 0 2px 6px;
  border-radius: 7px 0 0;
  background: linear-gradient(90deg, #808486, #74787a 120px, #23292d 170px, #2a2f33 210px, #0a0e12 290px, rgba(5, 10, 18, 0.7) 450px, rgba(5, 10, 18, 0.25) 540px);
  font: 13px/16px Roboto, "Open Sans", sans-serif;
}
.dialog-title span {
  margin-left: 5px;
}
.dialog-title button {
  align-self: flex-start;
  width: 50px;
  height: 17px;
  margin-left: auto;
  margin-right: 58px;
  padding: 8px 0 0 9px;
  border: 1px solid #cfd6da;
  border-top: 0;
  border-radius: 0 0 0 5px;
  background: linear-gradient(#98a4aa, #4a555b);
}
.dialog-title button svg {
  width: 14px;
  height: 6px;
}
.dialog-body {
  overflow: hidden;
  background: var(--green);
  border-top: 1px solid #000;
  font-size: 15px;
  line-height: 18px;
  -webkit-text-stroke: 0.3px #000;
}
.form-row {
  display: flex;
  height: 33px;
}
.form-row.second {
  height: 28px;
}
.form-row .frame {
  padding: 2px;
}
.form-row .field,
.form-row .option {
  height: 27px;
}
.form-row.second .field,
.form-row.second .btn {
  height: 22px;
}
.layer-frame {
  width: 167px;
}
.btn.spread {
  display: flex;
  justify-content: space-between;
  align-items: center;
  padding: 0 15px 0 2px;
}
.layer-field {
  width: 110px;
}
.slots {
  display: flex;
  align-items: center;
  width: 187px;
  margin-left: 150px;
  padding: 2px;
  border: 1px solid #000;
  background: var(--teal);
}
.slots label {
  width: 68px;
  padding-left: 7px;
}
.slots .option {
  flex: 1;
}
.slots select {
  padding-left: 30px;
}
.thickness {
  display: flex;
  align-items: center;
  width: 307px;
}
.thickness label {
  width: 165px;
}
.thickness .field {
  width: 105px;
}
.thickness span {
  margin-left: 4px;
}
.params {
  width: 176px;
}
.param-field {
  width: 129px;
  margin-left: 2px;
}
.table-view {
  height: 533px;
  padding: 2px 0 0 1px;
  margin-left: 2px;
  border: 2px solid;
  border-color: #276e5e transparent #a8f0df #276e5e;
  overflow: hidden;
}
table {
  width: 759px;
  margin-top: -2px;
  table-layout: fixed;
  border-spacing: 0;
}
.c-ico {
  width: 27px;
}
.c-tool {
  width: 67px;
}
.c-cnt {
  width: 60px;
}
.c-mid {
  width: 83px;
}
.c-type {
  width: 115px;
}
.c-tol {
  width: 74px;
}
th {
  height: 37px;
  padding: 0;
  border: solid #000;
  border-width: 1px 2px 1px 0;
  background: #b4fffd;
  font-weight: normal;
  line-height: 15px;
}
th:first-child,
td:first-child {
  border-left: 1px solid #000;
}
tbody::before {
  content: "";
  display: table-row;
  height: 2px;
}
td {
  height: 33px;
  padding: 1px;
  border: solid #000;
  border-width: 0 2px 2px 0;
}
tbody tr:first-child td {
  height: 35px;
  border-top: 2px solid #000;
}
.expand {
  width: 19px;
  height: 21px;
  margin: 0 auto;
}
.num {
  text-align: right;
  padding-right: 3px;
}
td .btn {
  width: 62px;
  height: 28px;
  padding-left: 2px;
  text-align: left;
}
.btn.orange {
  background: #ffc64e;
}
.btn.green {
  background: var(--green);
}
td.white {
  background: #fff;
}
td.cream {
  background: #ffffcf;
}
td .field {
  border-color: #999 #dcdcc4 #dcdcc4 #999;
}
td .option {
  margin-left: 4px;
  border-color: #e0e0c0 #a3a386 #a3a386 #e0e0c0;
}
td .option select {
  padding-left: 4px;
}
td .knob {
  border-color: #d5d5b5 #999980 #999980 #d5d5b5;
}
td.focus {
  box-shadow: inset 0 0 0 2px #000;
}
.hscroll {
  display: flex;
  height: 17px;
  margin: 4px 0 4px 2px;
  padding: 1px;
  border: 2px solid;
  border-color: #276e5e transparent #a8f0df #276e5e;
  background: #41ae94;
}
.hscroll i {
  flex: 1;
  margin-left: 2px;
  border: 2px solid;
  border-color: #a8f0df #276e5e #276e5e #a8f0df;
  background: var(--green);
}
.nav-row {
  display: flex;
  align-items: stretch;
  height: 34px;
  border: solid #000;
  border-width: 1px 0;
}
.nav-row .frame {
  border-width: 0 1px;
}
.current {
  width: 41px;
  margin-right: 2px;
  padding-left: 3px;
  border: 1px solid #000;
  border-width: 0 1px;
  background: #ffc64e;
  font-size: 12px;
  font-weight: bold;
  line-height: 30px;
}
.w-first {
  width: 59px;
}
.w-arrow {
  width: 35px;
}
.w-last {
  width: 49px;
}
.w-icon {
  width: 30px;
}
.w-icon svg {
  width: 16px;
  height: 18px;
  margin: 0 auto;
}
.w-icon path {
  fill: none;
  stroke: #000;
}
.w-icon .cross {
  stroke: #e02020;
  stroke-width: 2;
}
.index-label {
  width: 61px;
  padding-left: 3px;
  line-height: 32px;
}
.index {
  width: 59px;
  margin: 2px 4px 0 0;
}
.units {
  width: 88px;
  margin-left: auto;
  padding: 2px 2px 2px 5px;
  border-left: 1px solid #000;
  background: var(--teal);
}
.units select {
  padding-left: 3px;
}
.units.rest {
  flex: 0 0 114px;
  margin-left: 0;
  border-left-width: 2px;
}
.units.rest .btn {
  padding-left: 4px;
  text-align: left;
}
.tools-row {
  display: flex;
  justify-content: flex-end;
  height: 33px;
  margin-top: 4px;
  border-top: 1px solid #000;
}
.combine {
  width: 131px;
}
.tools-row .frame {
  padding: 2px 1px;
}
.merge {
  flex: 0 0 419px;
  display: flex;
  align-items: center;
  padding-left: 11px;
  background: var(--teal);
}
.merge label {
  width: 135px;
}
.merge .option {
  flex: 1;
}
.merge select {
  padding-left: 3px;
}
.action-row {
  display: flex;
  border-top: 1px solid #000;
}
.action-row .frame {
  flex: 1;
  height: 28px;
}

.notes {
  position: absolute;
  left: 0;
  top: 0;
  width: 100%;
  height: 100%;
  pointer-events: none;
}

/* taskbar */
.taskbar {
  position: relative;
  flex: none;
  display: flex;
  height: 41px;
  align-items: center;
  gap: 4px;
  border-top: 1px solid #2c3f48;
  background: #52242f;
  color: #fff;
}
.wallpaper {
  position: absolute;
  inset: 0;
  width: 100%;
  height: 100%;
  filter: blur(2px);
}
.taskbar::after {
  content: "";
  position: absolute;
  inset: 0;
  background: linear-gradient(#c9dcec 1px, #8199b4 2px, #7089aa 10px, rgba(90, 90, 120, 0) 16px);
  pointer-events: none;
}
.taskbar > :not(.wallpaper) {
  position: relative;
  z-index: 1;
}
.start {
  width: 52px;
  padding-left: 8px;
  margin-right: 4px;
}
.start svg {
  width: 38px;
  height: 38px;
}
.task {
  display: flex;
  justify-content: center;
  align-items: center;
  width: 58px;
  height: 38px;
  border: 1px solid #b5a8b0;
  border-radius: 3px;
  background: linear-gradient(150deg, rgba(230, 235, 245, 0.65), rgba(170, 170, 185, 0.4) 45%, rgba(120, 80, 90, 0.3) 60%, rgba(130, 60, 65, 0.4));
}
.task svg {
  width: 34px;
  height: 32px;
}
.task.stacked {
  width: 53px;
  margin-right: 5px;
  box-shadow: 2px 0 #4a3540, 3px 0 #a79aa4, 4px 0 #4a3540, 5px 0 #a79aa4;
}
.task.current {
  background: linear-gradient(150deg, rgba(255, 255, 255, 0.85), rgba(210, 200, 205, 0.7) 50%, rgba(170, 140, 145, 0.7));
}
.tray {
  display: flex;
  align-items: center;
  gap: 6px;
  margin-left: auto;
  margin-right: 8px;
}
.tray svg {
  width: 16px;
  height: 16px;
}
.tray text {
  font-family: "Liberation Sans", sans-serif;
}
.time {
  width: 70px;
  display: flex;
  flex-direction: column;
  align-items: center;
  font: 12px/18px "Open Sans", "Noto Sans", sans-serif;
}
.show-desktop {
  width: 14px;
  height: 39px;
  border: 1px solid #a09ba5;
  background: linear-gradient(rgba(220, 230, 240, 0.5), rgba(60, 50, 60, 0.6));
}
</style>
